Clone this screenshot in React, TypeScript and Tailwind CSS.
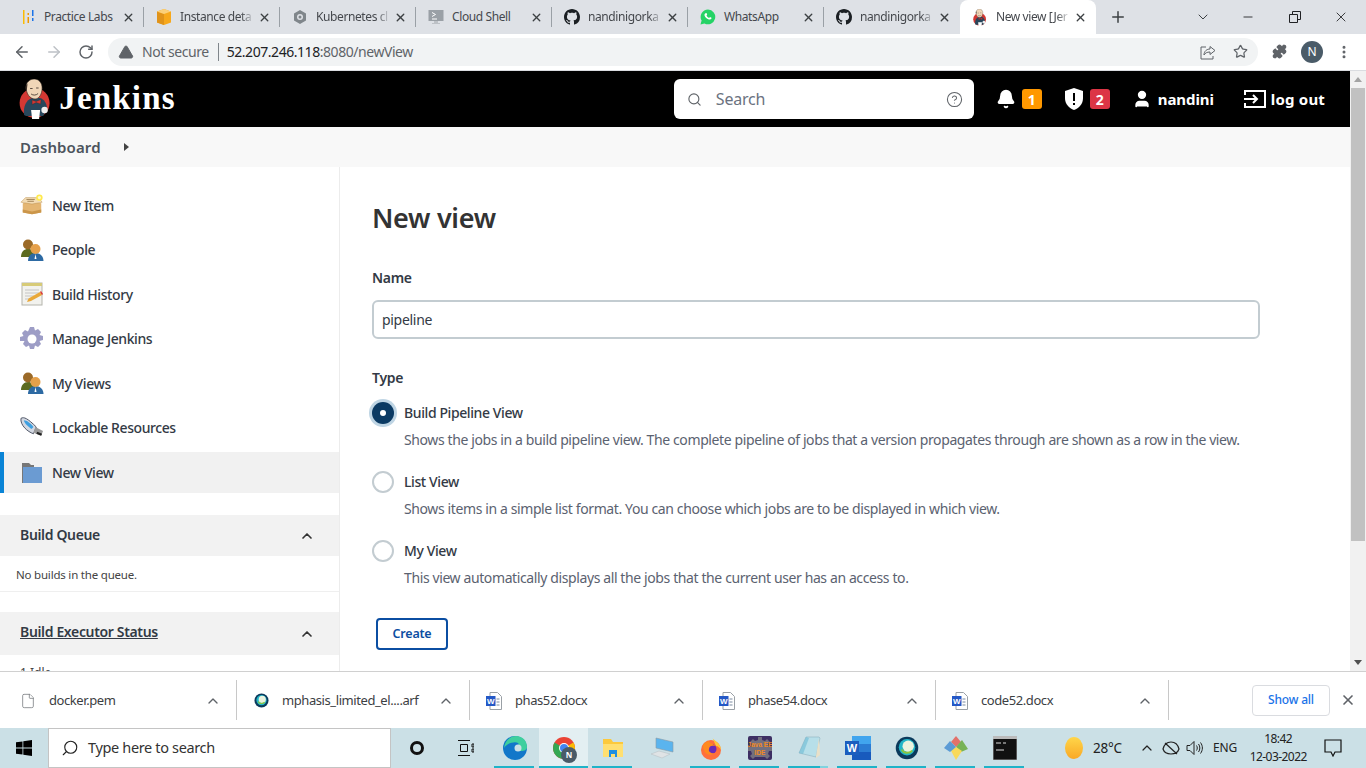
import React from "react";
import { ArrowLeft, ArrowRight, RotateCw, Plus, X, ChevronDown, ChevronUp, Minus, Star, Search, CircleHelp, User, Puzzle, MoreVertical, TriangleAlert, Bell, File } from "lucide-react";

const ui = { fontFamily: '"Noto Sans", "Open Sans", sans-serif' };

function Jenkins({ s = 40 }: { s?: number }) {
  return (
    <svg width={s * 0.78} height={s} viewBox="0 0 31 40">
      <circle cx="15.500" cy="24" r="15" fill="#d33833" />
      <path d="M5 36c-1-9 2-15 8-17l8 0c4 1 7 6 7 11l-4 7H7z" fill="#28475c" />
      <path d="M7 8c0-5 4-8 8-8 5 0 8 4 8 9 0 6-3 11-7 11-5 0-9-5-9-12z" fill="#f0d6b7" stroke="#332a24" strokeWidth="0.600" />
      <path d="M7.500 12C5.500 9 6.500 6 8.500 5c-.5 2-.5 5-1 7z" fill="#3d3028" />
      <path d="M11 9.500h2.500M17 9h2.500M12 15c2 1.500 5 1.500 7-.5" stroke="#332a24" strokeWidth="0.800" fill="none" />
      <path d="M13 21l4 1.500 5-2-.5 4.500-4.500-1.500-4 2z" fill="#d33833" stroke="#222" strokeWidth="0.300" />
      <path d="M12 31h9l-1 9h-7z" fill="#fff" />
      <circle cx="25.500" cy="31" r="3.200" fill="#eee" />
    </svg>
  );
}
function GitHub() {
  return <svg width="16" height="16" viewBox="0 0 16 16" fill="#1b1f23"><path d="M8 0C3.58 0 0 3.58 0 8c0 3.54 2.29 6.53 5.47 7.59.4.07.55-.17.55-.38 0-.19-.01-.82-.01-1.49-2.01.37-2.53-.49-2.69-.94-.09-.23-.48-.94-.82-1.13-.28-.15-.68-.52-.01-.53.63-.01 1.08.58 1.23.82.72 1.21 1.87.87 2.33.66.07-.52.28-.87.51-1.07-1.78-.2-3.64-.89-3.64-3.95 0-.87.31-1.59.82-2.15-.08-.2-.36-1.02.08-2.12 0 0 .67-.21 2.2.82.64-.18 1.32-.27 2-.27s1.36.09 2 .27c1.53-1.04 2.2-.82 2.2-.82.44 1.1.16 1.92.08 2.12.51.56.82 1.27.82 2.15 0 3.07-1.87 3.75-3.65 3.95.29.25.54.73.54 1.48 0 1.07-.01 1.93-.01 2.2 0 .21.15.46.55.38A8.01 8.01 0 0 0 16 8c0-4.42-3.58-8-8-8z" /></svg>;
}
const fav: Record<string, React.ReactNode> = {
  labs: <svg width="16" height="16" viewBox="0 0 16 16"><path d="M3 1h1.500v14H3z" fill="#fbbc04" /><path d="M7.500 4H9v2H7.500zM7.500 8H9v6H7.500z" fill="#f29900" /><path d="M12 1h1.500v6H12zM12 9h1.500v3H12z" fill="#1a73e8" /></svg>,
  aws: <svg width="16" height="16" viewBox="0 0 16 16"><path d="M8 0l7 2.500v11L8 16l-7-2.500v-11z" fill="#f7a81b" /><path d="M8 5v11l-7-2.500v-11z" fill="#e0931a" /><path d="M8 0l7 2.500L8 5 1 2.500z" fill="#fbd07a" /></svg>,
  k8s: <svg width="16" height="16" viewBox="0 0 16 16"><path d="M8 1l6 3.500v7L8 15l-6-3.500v-7z" fill="#80868b" /><circle cx="8" cy="8" r="3" fill="#dee1e6" /><circle cx="8" cy="8" r="1.500" fill="#80868b" /></svg>,
  shell: <svg width="16" height="16" viewBox="0 0 16 16"><rect x="0.500" y="1" width="15" height="11" fill="#9aa0a6" /><path d="M4 3.500l3.500 2L4 7.500M4 10h5" stroke="#fff" fill="none" /><path d="M6 12h4v2h2v1H4v-1h2z" fill="#bdc1c6" /></svg>,
  gh: <GitHub />,
  wa: <svg width="16" height="16" viewBox="0 0 16 16"><path d="M8 .5A7.400 7.400 0 0 0 1.600 11.600L.5 15.500l4-1A7.400 7.400 0 1 0 8 .5z" fill="#25d366" /><path d="M5.600 4.200c.5-.4 1-.2 1.100.2l.5 1.200-.7.9c.5 1 1.300 1.900 2.600 2.500l.9-.9 1.500.7c.2.8-.6 1.800-1.700 1.700C7.300 10.300 4 7.300 4.500 5.400c.1-.5.6-1 1.100-1.200z" fill="#fff" /></svg>,
  jk: <Jenkins s={17} />,
};

function Tab({ icon, title, active, sep = true, fade }: { icon: string; title: string; active?: boolean; sep?: boolean; fade?: boolean }) {
  return (
    <div className={`relative flex h-[34px] w-[136px] shrink-0 items-center pl-[12px] ${active ? "rounded-t-lg bg-white" : ""}`}>
      <span className="flex h-4 w-4 shrink-0 items-center justify-center">{fav[icon]}</span>
      <span className={`ml-[8px] w-[76px] whitespace-nowrap text-[12px] tracking-[-0.4px] text-[#45484d] ${fade ? "[mask-image:linear-gradient(to_right,black_80%,transparent_98%)]" : ""}`}>{title}</span>
      <X size={13} strokeWidth={2.5} className="ml-[2px] shrink-0 text-[#3c4043]" />
      {sep && <span className="absolute right-0 top-[7px] h-[20px] w-px bg-[#9aa0a6]" />}
    </div>
  );
}

function Word() {
  return (
    <svg width="16" height="18" viewBox="0 0 16 18">
      <path d="M4 .5h7.500L15.500 4.500v13H4z" fill="#fff" stroke="#9aa0a6" />
      <path d="M10.500 7h3M10.500 10h3M10.500 13h3" stroke="#7a8aa0" />
      <rect x="0" y="4" width="9.500" height="10" fill="#2458c6" />
      <text x="4.700" y="12" textAnchor="middle" fontSize="8" fontWeight="700" fill="#fff" fontFamily="Liberation Sans">W</text>
    </svg>
  );
}
function Webex({ s = 16 }: { s?: number }) {
  return (
    <svg width={s} height={s} viewBox="0 0 16 16">
      <circle cx="8" cy="8" r="7.500" fill="#0b3a5c" />
      <circle cx="8" cy="7.500" r="5.500" fill="#22b6c8" />
      <circle cx="8.800" cy="6.800" r="3.800" fill="#eaf3df" />
      <path d="M4.500 9c1 2.500 4.500 3 7 .8" stroke="#8cc63f" strokeWidth="1.300" fill="none" />
    </svg>
  );
}
function Dl({ icon, name }: { icon: React.ReactNode; name: string }) {
  return (
    <div className="relative flex h-full w-[233px] shrink-0 items-center pt-[1px]">
      <span className="ml-[20px] flex w-[16px] justify-center">{icon}</span>
      <span className="ml-[13px] w-[164px] whitespace-nowrap text-[13px] tracking-[-0.42px] text-[#3c4043]">{name}</span>
      <ChevronUp size={16} strokeWidth={2} className="-ml-[8px] text-[#5f6368]" />
      <span className="absolute -right-[4px] top-[8px] h-[40px] w-px bg-[#c8c8c8]" />
    </div>
  );
}

function IcBox() {
  return <svg width="26" height="24" viewBox="0 0 26 24"><path d="M3 10l10-2 10 2v10l-10 2-10-2z" fill="#e4b673" /><path d="M1 9l5-5h14l4 5-11 2z" fill="#f3dcb4" stroke="#b98d4c" strokeWidth="0.500" /><path d="M7 6h9M8 8h7" stroke="#8a6a3c" strokeWidth="0.800" /><path d="M3 17l10 2 10-2v3l-10 2-10-2z" fill="#cb964a" /><circle cx="21" cy="4" r="3.500" fill="#ffe94d" /><circle cx="21" cy="4" r="1.700" fill="#fffbd0" /></svg>;
}
function IcPeople() {
  return <svg width="24" height="24" viewBox="0 0 24 24"><path d="M1 19c0-5 3-8 7-8s6 2 6 8z" fill="#5c6b1f" /><circle cx="8" cy="6.500" r="5" fill="#9b6a28" /><path d="M8 23c0-5 3-8 7.500-8s8 3 8 8z" fill="#2d6aa3" /><circle cx="15.500" cy="11" r="5" fill="#e5a04a" /><path d="M15.500 16l1 5h-2z" fill="#fff" /></svg>;
}
function IcNote() {
  return <svg width="24" height="24" viewBox="0 0 24 24"><rect x="2" y="1" width="20" height="22" fill="#f2f2ee" stroke="#b4b4ac" /><rect x="2" y="1" width="20" height="3" fill="#d7cb78" /><path d="M5 8h14M5 11h14M5 14h9M5 17h6" stroke="#c4c4c4" /><path d="M7 20l1.500-3.500L20 10l2 3-11 6z" fill="#e9a838" /><path d="M20 10l2 3 1-1-2-3z" fill="#d33" /></svg>;
}
function IcGear() {
  return <svg width="24" height="24" viewBox="0 0 24 24"><path d="M10 0h4l1 3.500 3-1.500 3 3-1.500 3 3.500 1v4l-3.500 1 1.500 3-3 3-3-1.500-1 3.500h-4l-1-3.500-3 1.500-3-3 1.500-3L0 14v-4l3.500-1L2 6l3-3 3 1.500z" fill="#9d9dc6" /><circle cx="12" cy="12" r="4.500" fill="#fff" /></svg>;
}
function IcUsb() {
  return <svg width="25" height="24" viewBox="0 0 25 24"><path d="M1 2c3-2 7 0 16 9l-3 7C8 16 0 9 1 2z" fill="#d3d8e2" stroke="#4b5262" /><path d="M4 4c3 0 7 3 10 7l-2 2C9 11 5 8 4 4z" fill="#3e9fe0" /><path d="M16 11l8 4-2 5-8-3z" fill="#9a9a9a" /><path d="M18 16l5 2-1 2-5-2z" fill="#222" /></svg>;
}
function IcFolder() {
  return <svg width="24" height="24" viewBox="0 0 24 24"><path d="M2 2h7l2 2h3v18H2z" fill="#777" /><path d="M3 6h19v16H3z" fill="#6b9bd2" /></svg>;
}
function Item({ icon, label, h = "h-[44.500px]", active }: { icon: React.ReactNode; label: string; h?: string; active?: boolean }) {
  return (
    <div className={`flex ${h} items-center ${active ? "mt-[2px] border-l-4 border-[#0a84d6] bg-[#f1f1f1] pl-[16px]" : "pl-[20px]"}`}>
      <span className="flex w-[24px] justify-center">{icon}</span>
      <span className="ml-[8px] text-[14px] font-medium tracking-[-0.42px] text-[#333a45]">{label}</span>
    </div>
  );
}
function Radio({ on, label, desc }: { on?: boolean; label: string; desc: string }) {
  return (
    <div className="h-[69px]">
      <div className="flex h-[24px] items-center">
        {on ? (
          <span className="ml-[-3px] flex h-[28px] w-[28px] items-center justify-center rounded-full bg-[#bfd5e4]">
            <span className="flex h-[22px] w-[22px] items-center justify-center rounded-full bg-[#0b3a63]"><span className="h-[6px] w-[6px] rounded-full bg-white" /></span>
          </span>
        ) : (
          <span className="h-[22px] w-[22px] rounded-full border-2 border-[#c3ccd1] bg-white" />
        )}
        <span className={`${on ? "ml-[7px]" : "ml-[10px]"} mb-[2px] text-[14px] font-medium tracking-[-0.4px] text-[#333a45]`}>{label}</span>
      </div>
      <p className="ml-[32px] mt-[4px] whitespace-nowrap text-[14px] tracking-[-0.39px] text-[#5b6270]">{desc}</p>
    </div>
  );
}
function Slot({ children, active, bar = true, light }: { children?: React.ReactNode; active?: boolean; bar?: boolean; light?: boolean }) {
  return (
    <div className={`relative flex h-full w-[49px] shrink-0 items-center justify-center ${active ? "bg-[#e3eff2]" : ""}`}>
      {children}
      {bar && <span className={`absolute bottom-0 h-[2px] ${active ? "left-0 w-[49px]" : "left-[4px] w-[40px]"} bg-[#1fb3c8]`} />}
      {light && <span className="absolute bottom-0 left-[36px] h-[2px] w-[8px] bg-[#7fd3df]" />}
    </div>
  );
}

export default function App() {
  return (
    <div style={ui} className="flex h-[768px] w-[1366px] flex-col overflow-hidden bg-white">
      {/* tab strip */}
      <div className="flex h-[34px] shrink-0 items-center bg-[#dee1e6] pl-[8px]">
        <Tab icon="labs" title="Practice Labs" />
        <Tab icon="aws" title="Instance deta" fade />
        <Tab icon="k8s" title="Kubernetes cl" fade />
        <Tab icon="shell" title="Cloud Shell" />
        <Tab icon="gh" title="nandinigorka" fade />
        <Tab icon="wa" title="WhatsApp" />
        <Tab icon="gh" title="nandinigorka" fade sep={false} />
        <Tab icon="jk" title="New view [Jer" fade active sep={false} />
        <Plus size={18} strokeWidth={2} className="ml-[13px] text-[#3c4043]" />
        <ChevronDown size={16} strokeWidth={1.5} className="ml-[68px] text-[#3c4043]" />
        <Minus size={14} strokeWidth={1.5} className="ml-[30px] text-[#202124]" />
        <svg width="12" height="12" viewBox="0 0 12 12" className="ml-[34px]" fill="none" stroke="#202124"><path d="M.5 3.500h8v8h-8zM3.500 3.500v-3h8v8h-3" /></svg>
        <X size={16} strokeWidth={1.3} className="ml-[32px] text-[#202124]" />
      </div>
      {/* toolbar */}
      <div className="flex h-[37px] shrink-0 items-center border-b border-[#dadce0] pb-[1px]">
        <ArrowLeft size={18} strokeWidth={2} className="ml-[13px] text-[#5f6368]" />
        <ArrowRight size={18} strokeWidth={2} className="ml-[14px] text-[#bdc1c6]" />
        <RotateCw size={16} strokeWidth={2.2} className="ml-[15px] text-[#5f6368]" />
        <div className="ml-[14px] flex h-[28px] w-[1150px] items-center rounded-full bg-[#f1f3f4] text-[14px] tracking-[-0.45px]">
          <TriangleAlert size={16} fill="#5f6368" strokeWidth={1.5} className="ml-[10px] text-[#5f6368]" />
          <span className="ml-[8px] text-[#5f6368]">Not secure</span>
          <span className="ml-[9px] h-[18px] w-px bg-[#80868b]" />
          <span className="ml-[8px] text-[#202124]">52.207.246.118<span className="text-[#5f6368]">:8080/newView</span></span>
          <svg width="16" height="16" viewBox="0 0 16 16" fill="none" stroke="#5f6368" className="ml-auto"><path d="M6 3H1v12h12v-3" /><path d="M4 11c0-4 3-6 6-6V2.500l5 4-5 4V8c-3 0-5 1-6 3z" /></svg>
          <Star size={15} strokeWidth={2} className="ml-[17px] mr-[10px] text-[#5f6368]" />
        </div>
        <Puzzle size={15} fill="#5f6368" className="ml-[14px] text-[#5f6368]" />
        <span className="ml-[14px] flex h-[22px] w-[22px] items-center justify-center rounded-full bg-[#4a5b68] text-[12px] text-white">N</span>
        <MoreVertical size={16} strokeWidth={2.5} className="ml-[13px] text-[#5f6368]" />
      </div>

      {/* page */}
      <div className="flex min-h-0 flex-1">
        <div className="flex min-w-0 flex-1 flex-col">
          <header className="flex h-[56px] shrink-0 items-center bg-black text-white">
            <span className="ml-[19px] flex"><Jenkins s={40} /></span>
            <span className="ml-[9px] text-[33px] font-bold tracking-[1.2px]" style={{ fontFamily: '"Liberation Serif", serif' }}>Jenkins</span>
            <div className="ml-[498px] flex h-[40px] w-[300px] items-center rounded-md bg-white text-[#5f6368]">
              <Search size={15} strokeWidth={1.8} className="ml-[13px]" />
              <span className="ml-[14px] text-[16px] tracking-[-0.2px] text-[#6b7280]">Search</span>
              <CircleHelp size={17} strokeWidth={1.5} className="ml-auto mr-[11px]" />
            </div>
            <Bell size={20} fill="#fff" strokeWidth={2} className="ml-[22px]" />
            <span className="ml-[6px] flex h-[20px] w-[20px] items-center justify-center rounded-[3px] bg-[#ff9800] text-[14px] font-bold">1</span>
            <svg width="20" height="22" viewBox="0 0 20 22" className="ml-[22px]"><path d="M10 0l9 3v7c0 6-4 10-9 12-5-2-9-6-9-12V3z" fill="#fff" /><path d="M9 5h2v8H9zM9 15h2v2H9z" fill="#000" /></svg>
            <span className="ml-[6px] flex h-[20px] w-[20px] items-center justify-center rounded-[3px] bg-[#dc3545] text-[14px] font-bold">2</span>
            <User size={20} fill="#fff" strokeWidth={2} className="ml-[22px]" />
            <span className="ml-[6px] text-[15px] font-bold tracking-[-0.1px]">nandini</span>
            <svg width="23" height="20" viewBox="0 0 23 20" className="ml-[29px]" fill="none" stroke="#fff" strokeWidth="2"><path d="M2 6V2h20v16H2v-4M1 10h13M10 6l4 4-4 4" /></svg>
            <span className="ml-[5px] text-[15px] font-bold tracking-[0.2px]">log out</span>
          </header>
          <div className="flex h-[40px] shrink-0 items-center bg-[#f8f8f8] pl-[20px]">
            <span className="text-[15px] font-semibold tracking-[0.1px] text-[#4d545d]">Dashboard</span>
            <svg width="6" height="8" viewBox="0 0 6 8" className="ml-[23px]"><path d="M0 0l5 4-5 4z" fill="#444" /></svg>
          </div>
          <div className="flex min-h-0 flex-1 overflow-hidden">
            <aside className="w-[340px] shrink-0 border-r border-[#ececec] pt-[16px]">
              <Item icon={<IcBox />} label="New Item" />
              <Item icon={<IcPeople />} label="People" />
              <Item icon={<IcNote />} label="Build History" />
              <Item icon={<IcGear />} label="Manage Jenkins" />
              <Item icon={<IcPeople />} label="My Views" />
              <Item icon={<IcUsb />} label="Lockable Resources" />
              <Item icon={<IcFolder />} label="New View" h="h-[41px]" active />
              <div className="mt-[22px] flex h-[41px] items-center justify-between bg-[#f2f2f2] pl-[20px] pr-[24px]">
                <span className="mb-[2px] text-[14px] font-semibold tracking-[-0.35px] text-[#333a45]">Build Queue</span>
                <ChevronUp size={16} strokeWidth={2.5} className="text-[#333]" />
              </div>
              <div className="flex h-[36px] items-center border-b border-[#efefef] pl-[16px] pt-[2px] text-[11.500px] tracking-[-0.2px] text-[#444]">No builds in the queue.</div>
              <div className="mt-[20px] flex h-[43px] items-center justify-between bg-[#f2f2f2] pl-[20px] pr-[24px]">
                <span className="mb-[4px] text-[14px] font-semibold tracking-[-0.35px] text-[#333a45] underline">Build Executor Status</span>
                <ChevronUp size={16} strokeWidth={2.5} className="text-[#333]" />
              </div>
              <div className="pl-[20px] pt-[9px] text-[12px] text-[#444]">1 Idle</div>
            </aside>
            <main className="min-w-0 flex-1 pl-[32px] pr-[90px] pt-[32px]">
              <h1 className="text-[27px] font-semibold leading-[38px] tracking-[-0.3px] text-[#333]">New view</h1>
              <div className="mt-[31px] text-[14px] font-semibold leading-[20px] tracking-[-0.3px] text-[#333a45]">Name</div>
              <div className="mt-[12px] flex h-[39px] items-center rounded-md border-2 border-[#c3ccd1] pl-[8px] text-[14px] tracking-[-0.3px] text-[#333a45]">pipeline</div>
              <div className="mt-[29px] text-[14px] font-semibold leading-[20px] tracking-[-0.3px] text-[#333a45]">Type</div>
              <div className="mt-[13px]">
                <Radio on label="Build Pipeline View" desc="Shows the jobs in a build pipeline view. The complete pipeline of jobs that a version propagates through are shown as a row in the view." />
                <Radio label="List View" desc="Shows items in a simple list format. You can choose which jobs are to be displayed in which view." />
                <Radio label="My View" desc="This view automatically displays all the jobs that the current user has an access to." />
              </div>
              <button className="ml-[4px] mt-[10px] h-[32px] w-[72px] rounded-[4px] border-2 border-[#0b4ea2] pt-[1px] text-[12.500px] font-semibold tracking-[-0.2px] text-[#0b4ea2]">Create</button>
            </main>
          </div>
        </div>
        {/* scrollbar */}
        <div className="flex w-[16px] shrink-0 flex-col items-center bg-[#f1f1f1]">
          <svg width="8" height="17" viewBox="0 0 8 17" className="shrink-0"><path d="M4 6l4 5H0z" fill="#a3a3a3" /></svg>
          <div className="h-[453px] w-[14px] bg-[#c1c1c1]" />
          <svg width="8" height="17" viewBox="0 0 8 17" className="mt-auto shrink-0"><path d="M4 11L8 6H0z" fill="#505050" /></svg>
        </div>
      </div>

      {/* download shelf */}
      <div className="flex h-[57px] shrink-0 items-center border-t border-[#d0d0d0] bg-white">
        <Dl icon={<File size={18} strokeWidth={1} className="text-[#5f6368]" fill="#fff" />} name="docker.pem" />
        <Dl icon={<Webex s={15} />} name="mphasis_limited_el....arf" />
        <Dl icon={<Word />} name="phas52.docx" />
        <Dl icon={<Word />} name="phase54.docx" />
        <Dl icon={<Word />} name="code52.docx" />
        <button className="ml-[87px] h-[31px] w-[78px] rounded-[4px] border border-[#dadce0] text-[12px] font-medium tracking-[-0.2px] text-[#1a73e8]">Show all</button>
        <X size={16} strokeWidth={2.5} className="ml-[10px] text-[#5f6368]" />
      </div>

      {/* taskbar */}
      <div className="flex h-[40px] shrink-0 items-center bg-[#cbe0e6]">
        <svg width="16" height="16" viewBox="0 0 16 16" className="ml-[16px]" fill="#000"><path d="M0 2.300l6.500-.9v6.200H0zM7.300 1.300L16 0v7.600H7.300zM0 8.400h6.500v6.200L0 13.700zM7.300 8.400H16V16l-8.700-1.200z" /></svg>
        <div className="ml-[16px] flex h-[40px] w-[343px] items-center border border-[#c4c4c4] bg-white">
          <Search size={18} strokeWidth={1.5} className="ml-[12px] -scale-x-100 text-[#222]" />
          <span className="ml-[9px] text-[14.500px] tracking-[-0.35px] text-[#333]">Type here to search</span>
        </div>
        <div className="ml-[1px] flex h-full">
          <Slot bar={false}><span className="h-[14px] w-[14px] rounded-full border-[3px] border-[#111]" /></Slot>
          <Slot bar={false}><svg width="16" height="16" viewBox="0 0 16 16" fill="none" stroke="#111"><path d="M0 .5h12M0 15.500h12M2.500 4.500h7v7h-7zM14 4h2v3h-2zM14 9h2v3h-2z" /></svg></Slot>
          <Slot><svg width="26" height="26" viewBox="0 0 26 26"><circle cx="13" cy="13" r="12" fill="#1277c9" /><path d="M2 13C3 5 9 1 14 1c7 0 11 5 11 11 0 3-3 4-6 4-2 0-4-1-4-3 0-3 3-3 1-5-3-2-11 0-14 5z" fill="#3ecf9e" /><circle cx="16" cy="13" r="3.500" fill="#cbe0e6" /></svg></Slot>
          <Slot active>
            <svg width="24" height="24" viewBox="0 0 24 24"><circle cx="12" cy="12" r="11" fill="#ea4335" /><path d="M12 12L2.500 6.500A11 11 0 0 0 12 23z" fill="#34a853" /><path d="M12 12v11a11 11 0 0 0 9.500-16.500z" fill="#fbbc04" /><circle cx="12" cy="12" r="5" fill="#fff" /><circle cx="12" cy="12" r="4" fill="#4285f4" /></svg>
            <span className="absolute left-[22px] top-[19px] flex h-[16px] w-[16px] items-center justify-center rounded-full bg-[#4a5b68] text-[8px] font-bold text-white">N</span>
          </Slot>
          <Slot><svg width="22" height="20" viewBox="0 0 22 20"><path d="M1 1h8l2 3h10v15H1z" fill="#fcc93c" /><path d="M1 6h20v13H1z" fill="#ffdf70" /><path d="M7 12h8v7h-2v-3H9v3H7z" fill="#1f8fe0" /></svg></Slot>
          <Slot bar={false}><svg width="24" height="22" viewBox="0 0 24 22"><path d="M6 1l17 4v10L6 11z" fill="#5ab4ee" stroke="#8a9aa4" strokeWidth="0.600" /><path d="M1 17l8-3 11 3-8 4z" fill="#dfe3e5" stroke="#b4bcc0" strokeWidth="0.500" /></svg></Slot>
          <Slot><svg width="24" height="24" viewBox="0 0 24 24"><circle cx="12" cy="14" r="10" fill="#ff6f3c" /><path d="M13 1c1 4 9 5 9 13-1-2-3-4-5-4z" fill="#ffc83a" /><circle cx="12.500" cy="13" r="5" fill="#6a2bb8" /><path d="M4 9c2-3 5-4 6-4-1 2 6 3 6 5-3-1-6 0-6 3-1 3 3 5 6 4-4 3-10 2-11-3-1-2-1-3-1-5z" fill="#ff8a1f" /></svg></Slot>
          <Slot><svg width="24" height="24" viewBox="0 0 24 24"><rect width="24" height="24" rx="2" fill="#3d2f63" /><path d="M10 1h4v3l3 1 2-2 3 3-2 2 1 3h3v4h-3l-1 3 2 2-3 3-2-2H7l-2 2-3-3 2-2-1-3H0v-4h3l1-3-2-2 3-3 2 2 3-1z" fill="#8a8a8a" opacity="0.7" /><text x="12" y="11" textAnchor="middle" fontSize="6.500" fontWeight="700" fill="#f08a24" fontFamily="Liberation Sans">Java EE</text><text x="12" y="19" textAnchor="middle" fontSize="6.500" fontWeight="700" fill="#f08a24" fontFamily="Liberation Sans">IDE</text></svg></Slot>
          <Slot light><svg width="24" height="24" viewBox="0 0 24 24"><path d="M9 1h13l1 1-4 19L2 17z" fill="#b7dfe9" stroke="#8fb1bf" strokeWidth="0.600" /><path d="M22 2l1 17-4 3 0-2z" fill="#e8e0c8" /><path d="M2 17L9 1l3 1-6 16z" fill="#6cbad3" opacity="0.6" /></svg></Slot>
          <Slot><svg width="26" height="24" viewBox="0 0 26 24"><path d="M7 0h19v24H7z" fill="#185abd" /><path d="M7 0h19v8H7z" fill="#41a5ee" /><path d="M7 8h19v8H7z" fill="#2b7cd3" /><rect x="0" y="5" width="14" height="14" fill="#1b5ebe" /><text x="7" y="16" textAnchor="middle" fontSize="11" fontWeight="700" fill="#fff" fontFamily="Liberation Sans">W</text></svg></Slot>
          <Slot><Webex s={24} /></Slot>
          <Slot><svg width="24" height="26" viewBox="0 0 24 26"><path d="M12 1l5 6-5 5-5-5z" fill="#e2716a" /><path d="M12 12l6-7 6 9-7 3z" fill="#77b255" /><path d="M6 14l6-2 6 4-6 9z" fill="#f8d95a" /><path d="M0 13l6-7 6 6-6 5z" fill="#5b9bd5" /></svg></Slot>
          <Slot><svg width="24" height="24" viewBox="0 0 24 24"><rect width="24" height="24" fill="#111" stroke="#999" /><rect width="24" height="3" fill="#bbb" /><path d="M3 7h5M10 7h3M3 14h8" stroke="#ddd" /></svg></Slot>
        </div>
        <svg width="18" height="22" viewBox="0 0 18 22" className="ml-[36px]"><defs><linearGradient id="sun" x1="0" y1="0" x2="0" y2="1"><stop offset="0" stopColor="#ffd64a" /><stop offset="1" stopColor="#f9a825" /></linearGradient></defs><ellipse cx="9" cy="11" rx="9" ry="11" fill="url(#sun)" /></svg>
        <span className="ml-[10px] text-[13.500px] tracking-[-0.2px] text-[#222]">28°C</span>
        <ChevronUp size={16} strokeWidth={1.8} className="ml-[17px] text-[#222]" />
        <svg width="18" height="16" viewBox="0 0 18 16" fill="none" stroke="#222" strokeWidth="1.200" className="ml-[7px]"><path d="M1 9c1-4 4-7 8-7s7 3 8 7c-1 3-4 5-8 5s-7-2-8-5zM3 3l12 11" /></svg>
        <svg width="18" height="16" viewBox="0 0 18 16" fill="none" stroke="#222" className="ml-[6px]"><path d="M1 5.500h3l4-4v13l-4-4H1zM10.500 5.500c1 1.500 1 3.500 0 5M12.500 4c1.800 2.500 1.800 5.500 0 8M14.500 2.500c2.500 3.500 2.500 7.500 0 11" /></svg>
        <span className="ml-[9px] text-[12px] tracking-[-0.1px] text-[#222]">ENG</span>
        <div className="ml-[11px] flex w-[60px] flex-col items-center whitespace-nowrap text-[12px] leading-[18px] tracking-[-0.55px] text-[#222]">
          <span>18:42</span>
          <span>12-03-2022</span>
        </div>
        <svg width="18" height="18" viewBox="0 0 18 18" className="ml-[16px]" fill="none" stroke="#111" strokeWidth="1.200"><path d="M1 1h16v12h-6l-2 4-2-4H1z" /></svg>
      </div>
    </div>
  );
}
